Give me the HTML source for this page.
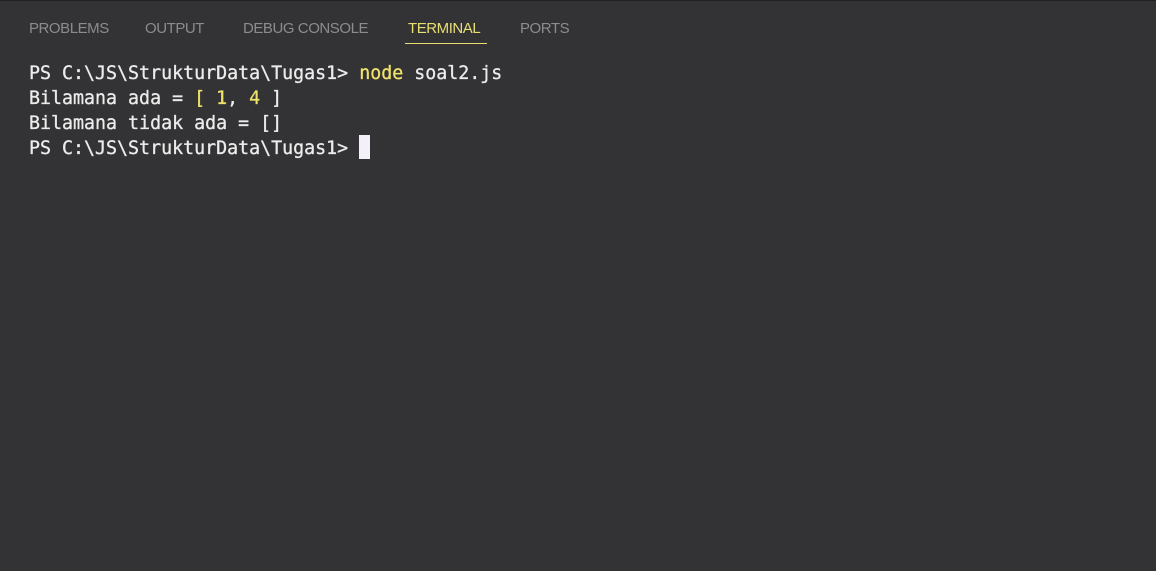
<!DOCTYPE html>
<html><head><style>
html,body{margin:0;padding:0;}
body{width:1156px;height:571px;background:#333335;position:relative;overflow:hidden;font-family:"Liberation Sans",sans-serif;}
.top{position:absolute;left:0;top:0;width:1156px;height:1px;background:#202022;}
.tab{position:absolute;top:19px;font-size:15px;color:#8c8c8c;line-height:20px;letter-spacing:-0.45px;}
.act{color:#e8df72;}
.ul{position:absolute;left:405px;top:43px;width:82px;height:1px;background:#e8df72;}
.term{position:absolute;left:29px;top:61px;font-family:"DejaVu Sans Mono",monospace;font-size:18.3px;line-height:25px;color:#ececec;white-space:pre;-webkit-text-stroke:0.3px currentColor;}
.y{color:#efe26a;}
.cur{position:absolute;left:359px;top:135px;width:11px;height:24px;background:#f4f0fa;}
</style></head><body>
<div class="top"></div>
<div class="tab" style="left:29px">PROBLEMS</div>
<div class="tab" style="left:145px">OUTPUT</div>
<div class="tab" style="left:243px">DEBUG CONSOLE</div>
<div class="tab act" style="left:408px">TERMINAL</div>
<div class="tab" style="left:520px">PORTS</div>
<div class="ul"></div>
<div class="term">PS C:\JS\StrukturData\Tugas1&gt; <span class="y">node</span> soal2.js
Bilamana ada = <span class="y">[</span> <span class="y">1</span>, <span class="y">4</span> ]
Bilamana tidak ada = []
PS C:\JS\StrukturData\Tugas1&gt; </div>
<div class="cur"></div>
</body></html>
